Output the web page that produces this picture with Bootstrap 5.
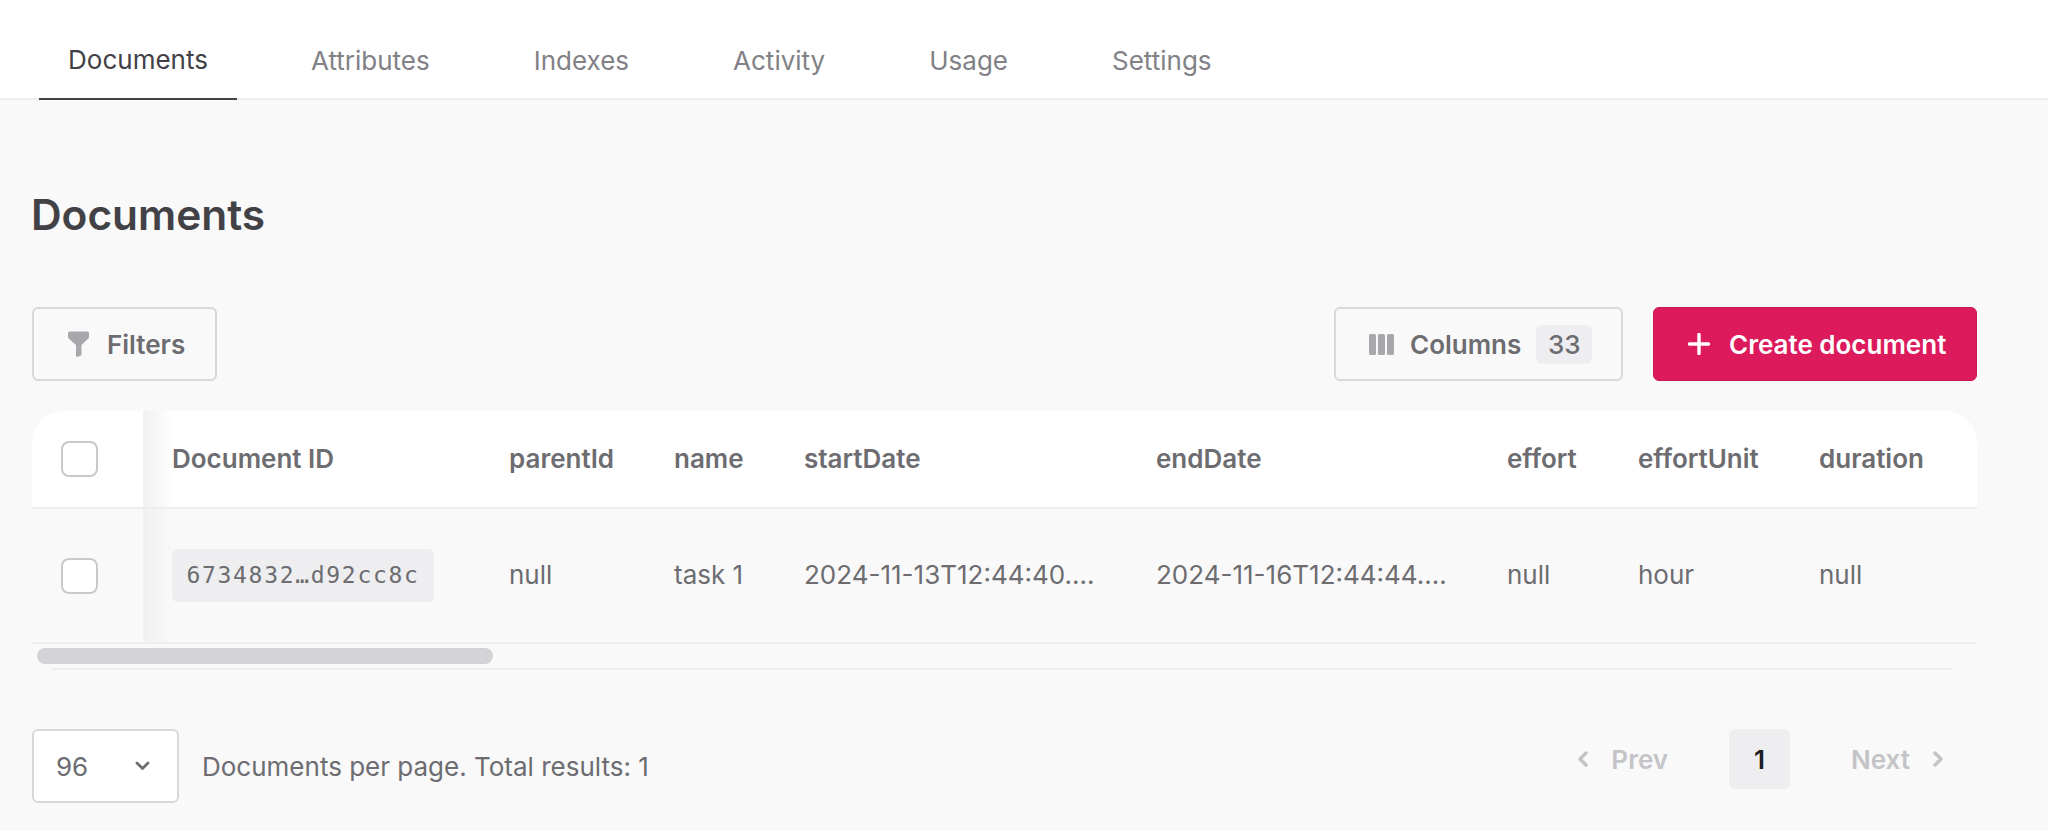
<!DOCTYPE html>
<html lang="en">
<head>
<meta charset="utf-8">
<title>Documents</title>
<link href="https://cdn.jsdelivr.net/npm/bootstrap@5.3.0/dist/css/bootstrap.min.css" rel="stylesheet">
<style>
html,body{height:831px;overflow:hidden}
body{background:#f9f9f9;font-family:Inter,"Liberation Sans",sans-serif;color:#6c6c71;font-size:26px}
.topbar{background:#fff;border-bottom:2px solid #eeeeef;height:100px;padding-left:39px;gap:44px}
.tabitem{display:flex;align-items:center;height:98px;padding:22px 30px 0;color:#818186;font-size:26px;text-decoration:none}
.tabitem.active-tab{color:#414146;border-bottom:2px solid #414146;height:100px;padding:20px 0 0;width:198px;justify-content:center}
.pagewrap{padding:0 71px 0 32px}
.pagehead{height:207px;margin:0 0 0 -1px;font-size:42.4px;font-weight:600;color:#414146;padding-top:92px;line-height:46px}
.toolbar{height:74px;margin-bottom:30px}
.toolbtn{display:flex;align-items:center;height:74px;border:2px solid #d8d8db;border-radius:6px;background:#f9f9f9;color:#6c6c71;font-weight:600;font-size:26px;padding:0;--bs-btn-hover-bg:#f9f9f9}
.btn-filters{width:185px;padding-left:33px;gap:17px}
.btn-columns{width:289px;padding-left:33px;gap:16px}
.countpill{background:#eeeef0;border-radius:6px;width:56px;height:39px;display:flex;align-items:center;justify-content:center;font-weight:500;margin-left:-1px}
.btn-create{display:flex;align-items:center;height:74px;width:324px;margin-left:30px;padding:0 0 0 34px;gap:19px;background:#dc1a5c;border:1px solid #c91753;border-radius:6px;color:#fff;font-weight:600;font-size:26px}
.btn-create:hover{background:#dc1a5c;color:#fff}
.datatable{border-collapse:separate;border-spacing:0;table-layout:fixed;width:2100px;margin:0;--bs-table-bg:transparent;color:#6c6c71}
.tablebox{overflow:hidden;width:1945px;height:233px;border-radius:32px 32px 0 0}
.datatable th,.datatable td{padding:0 0 2px 29px;vertical-align:middle;border-bottom:2px solid #eeeeef;white-space:nowrap;overflow:hidden;font-size:26px;color:#6c6c71;box-shadow:none}
.datatable th{height:98px;background:#fff;font-weight:600}
.datatable td{height:135px;background:transparent;font-weight:400}
.datatable .cellcheck{padding:0 0 0 29px}
.datatable td.cellid{padding-bottom:0}
.datatable .cellid{background-image:linear-gradient(90deg,#f0f0f1,rgba(240,240,241,0) 30px);background-repeat:no-repeat}
.boxcheck{display:block;width:37px;height:36px;border:2px solid #c9c9cd;border-radius:8px;background:#fff;margin:0}
.idpill{display:inline-flex;align-items:center;justify-content:center;width:262px;height:53px;background:#eeeef0;border-radius:6px;font-family:"DejaVu Sans Mono","Liberation Mono",monospace;font-size:23px;letter-spacing:1.7px;color:#6c6c71}
.scrolltrack{padding:4px 0 0 5px;width:1926px}
.scrollthumb{height:16px;background:#d4d4d8;border-radius:8px}
.scrollline{height:2px;background:#eeeeef;margin:4px 0 0 14px;border-radius:2px;width:1902px}
.pagerrow{margin-top:59px;height:74px}
.sizepick{display:flex;align-items:center;justify-content:space-between;width:147px;height:74px;background:#fff;border:2px solid #d8d8db;border-radius:6px;padding:0 27px 0 22px;margin-right:23px;color:#6c6c71}
.pagerinfo{color:#6c6c71}
.pagernav{margin-right:33px;align-self:flex-start}
.pagerlink{display:flex;align-items:center;gap:23px;color:#c4c4c8;font-weight:600;font-size:26px}
.pagenum{display:flex;align-items:center;justify-content:center;width:61px;height:60px;background:#eeeef0;border-radius:6px;color:#1d1d21;font-weight:600;margin:0 61px}
</style>
</head>
<body>
<nav class="topbar d-flex align-items-start">
  <a class="tabitem active-tab" href="#">Documents</a>
  <a class="tabitem" href="#">Attributes</a>
  <a class="tabitem" href="#">Indexes</a>
  <a class="tabitem" href="#">Activity</a>
  <a class="tabitem" href="#">Usage</a>
  <a class="tabitem" href="#">Settings</a>
</nav>
<main class="pagewrap">
  <h1 class="pagehead">Documents</h1>
  <div class="toolbar d-flex align-items-center justify-content-between">
    <button class="btn toolbtn btn-filters" type="button">
      <svg width="23" height="26" viewBox="0 0 23 26" fill="#a8a8ac"><path d="M1 2.500C1 1.100 2 .5 3 .5h17c1 0 2 .6 2 2V6c0 .6-.2 1-.6 1.400L14.500 14v9.500c0 .6-.4 1-.9 1.300l-3 1c-.9.3-1.600-.3-1.600-1.200V14L1.600 7.400C1.200 7 1 6.600 1 6z"/></svg>
      <span>Filters</span>
    </button>
    <div class="d-flex">
      <button class="btn toolbtn btn-columns" type="button">
        <svg width="25" height="21" viewBox="0 0 25 21" fill="#a8a8ac"><rect width="7" height="21" rx="1.500"/><rect x="9" width="7" height="21" rx="1.500"/><rect x="18" width="7" height="21" rx="1.500"/></svg>
        <span>Columns</span>
        <span class="countpill">33</span>
      </button>
      <button class="btn btn-create" type="button">
        <svg width="22" height="22" viewBox="0 0 22 22" fill="none" stroke="#fff" stroke-width="3.400" stroke-linecap="round"><path d="M11 1.500v19M1.500 11h19"/></svg>
        <span>Create document</span>
      </button>
    </div>
  </div>
  <div class="tablebox">
    <table class="table datatable">
      <colgroup>
        <col style="width:111px"><col style="width:337px"><col style="width:165px"><col style="width:130px"><col style="width:352px"><col style="width:351px"><col style="width:131px"><col style="width:181px"><col style="width:342px">
      </colgroup>
      <thead>
        <tr>
          <th class="cellcheck"><span class="boxcheck"></span></th>
          <th class="cellid">Document ID</th>
          <th>parentId</th>
          <th>name</th>
          <th>startDate</th>
          <th>endDate</th>
          <th>effort</th>
          <th>effortUnit</th>
          <th>duration</th>
        </tr>
      </thead>
      <tbody>
        <tr>
          <td class="cellcheck"><span class="boxcheck"></span></td>
          <td class="cellid"><span class="idpill">6734832…d92cc8c</span></td>
          <td>null</td>
          <td>task 1</td>
          <td>2024-11-13T12:44:40....</td>
          <td>2024-11-16T12:44:44....</td>
          <td>null</td>
          <td>hour</td>
          <td>null</td>
        </tr>
      </tbody>
    </table>
  </div>
  <div class="scrolltrack">
    <div class="scrollthumb" style="width:456px"></div>
    <div class="scrollline"></div>
  </div>
  <div class="pagerrow d-flex align-items-center justify-content-between">
    <div class="d-flex align-items-center">
      <div class="sizepick"><span>96</span>
        <svg width="15" height="10" viewBox="0 0 15 10" fill="none" stroke="#6c6c71" stroke-width="2.800" stroke-linecap="round" stroke-linejoin="round"><path d="M2 2l5.500 5.500L13 2"/></svg>
      </div>
      <span class="pagerinfo">Documents per page. Total results: 1</span>
    </div>
    <div class="pagernav d-flex align-items-center">
      <span class="pagerlink">
        <svg width="11" height="16" viewBox="0 0 11 16" fill="none" stroke="#c4c4c8" stroke-width="3.500" stroke-linecap="round" stroke-linejoin="round"><path d="M9 2L3 8l6 6"/></svg>
        Prev</span>
      <span class="pagenum">1</span>
      <span class="pagerlink">Next
        <svg width="11" height="16" viewBox="0 0 11 16" fill="none" stroke="#c4c4c8" stroke-width="3.500" stroke-linecap="round" stroke-linejoin="round"><path d="M2 2l6 6-6 6"/></svg>
      </span>
    </div>
  </div>
</main>
<script src="https://cdn.jsdelivr.net/npm/bootstrap@5.3.0/dist/js/bootstrap.bundle.min.js"></script>
</body>
</html>
